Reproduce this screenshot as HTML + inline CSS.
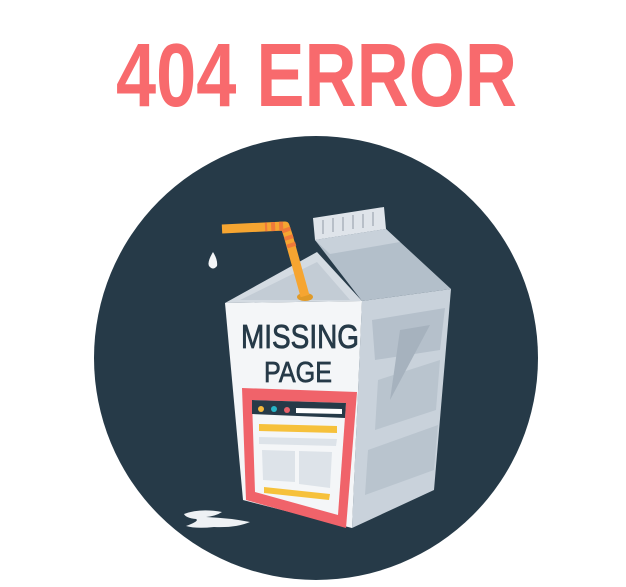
<!DOCTYPE html>
<html><head><meta charset="utf-8"><style>
html,body{margin:0;padding:0;background:#fff;width:626px;height:587px;overflow:hidden}
svg{display:block}
</style></head><body>
<svg width="626" height="587" viewBox="0 0 626 587" xmlns="http://www.w3.org/2000/svg">
<text x="116" y="106" font-family="Liberation Sans, sans-serif" font-weight="bold" font-size="90" fill="#f86a6d" textLength="401" lengthAdjust="spacingAndGlyphs">404 ERROR</text>
<circle cx="316" cy="358" r="222" fill="#263a48"/>
<path d="M184 514 Q200 508 222 512 Q216 516 206 517 Q230 518 250 522 Q236 528 214 527 Q196 529 186 526 Q200 521 196 519 Q186 518 184 514Z" fill="#eef1f4"/>
<polygon points="313,218 384,207 386,229 315,240" fill="#dfe4ea"/>
<g stroke="#aab3bd" stroke-width="1.5"><line x1="323" y1="220" x2="323" y2="234"/><line x1="333" y1="218" x2="333" y2="232"/><line x1="343" y1="217" x2="343" y2="231"/><line x1="353" y1="215" x2="353" y2="229"/><line x1="363" y1="214" x2="363" y2="228"/><line x1="373" y1="212" x2="373" y2="226"/></g>
<polygon points="315,240 386,229 451,289 362,301" fill="#b3bfca"/>
<polygon points="315,240 386,229 400,242 330,254" fill="#c8d1da"/>
<polygon points="362,301 451,289 434,490 352,528" fill="#c9d2db"/>
<polygon points="372,320 445,308 440,350 375,360" fill="#b5c0cb"/>
<polygon points="378,380 440,360 436,410 375,430" fill="#b9c4ce"/>
<polygon points="368,450 438,425 434,470 365,495" fill="#b9c4ce"/>
<polygon points="400,330 430,325 390,400" fill="#a6b2be"/>
<polygon points="225,303 317,252 362,301" fill="#d4dbe2"/>
<polygon points="240,300 317,262 350,300" fill="#c3ccd5"/>
<polygon points="225,303 362,301 352,528 243,500" fill="#f4f6f8"/>
<ellipse cx="305" cy="297" rx="8" ry="4" fill="#e09a28"/>
<path d="M305 296 L288 235 L285 226 L222 229" fill="none" stroke="#f6a531" stroke-width="9" stroke-linejoin="round"/>
<path d="M292 247 L285 226 L265 227" fill="none" stroke="#f07a3a" stroke-width="9" stroke-linejoin="round" stroke-dasharray="4 4"/>
<path d="M213 252 Q207 262 209 266 Q213 271 217 266 Q218 260 213 252Z" fill="#f4f6f8"/>
<text x="300" y="348" text-anchor="middle" font-family="Liberation Sans, sans-serif" font-size="33" fill="#263a48" stroke="#263a48" stroke-width="0.8" textLength="118" lengthAdjust="spacingAndGlyphs">MISSING</text>
<text x="298" y="382" text-anchor="middle" font-family="Liberation Sans, sans-serif" font-size="29" fill="#263a48" stroke="#263a48" stroke-width="0.7" textLength="68" lengthAdjust="spacingAndGlyphs">PAGE</text>
<polygon points="242,388 357,392 346,528 246,500" fill="#f0636a"/>
<polygon points="252,400 346,403 338,515 255,492" fill="#f4f6f8"/>
<polygon points="252,400 346,403 345,418 252,414" fill="#263a48"/>
<circle cx="261" cy="409" r="3" fill="#f6b93b"/><circle cx="274" cy="409" r="3" fill="#26b5c7"/><circle cx="287" cy="410" r="3" fill="#e8606a"/>
<polygon points="296,408 342,409 342,414 296,413" fill="#fff"/>
<polygon points="259,424 337,426 337,433 259,431" fill="#f6c13b"/>
<polygon points="259,437 337,439 336,446 259,444" fill="#dde3e9"/>
<polygon points="262,450 295,451 295,482 263,480" fill="#dde3e9"/>
<polygon points="299,451 332,452 330,488 299,484" fill="#dde3e9"/>
<polygon points="264,487 330,494 329,500 264,493" fill="#f6c13b"/>
</svg>
</body></html>
